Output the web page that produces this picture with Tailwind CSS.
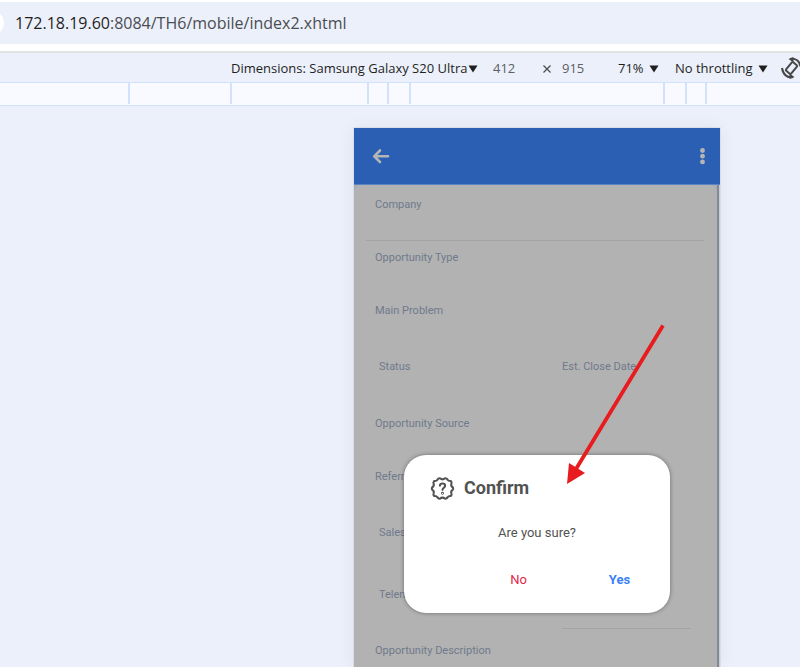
<!DOCTYPE html>
<html lang="en">
<head>
<meta charset="utf-8">
<meta name="viewport" content="width=device-width, initial-scale=1">
<title>Opportunity</title>
<script src="https://cdn.jsdelivr.net/npm/@tailwindcss/browser@4"></script>
</head>
<body class="relative flex h-screen flex-col overflow-hidden bg-[#ebf0fa] font-['Open_Sans','Noto_Sans',sans-serif] text-[#1f1f1f]">
  <!-- Address bar -->
  <header class="shrink-0 bg-white pt-0.5 pb-[7px]">
    <div class="flex h-[42px] items-center overflow-hidden bg-[#ecf0fa]">
      <span class="-ml-5 size-6 shrink-0 rounded-full bg-white"></span>
      <p class="pl-[11px] text-[16px] leading-6 whitespace-nowrap">172.18.19.60<span class="text-[#4a4d51]">:8084/TH6/mobile/index2.xhtml</span></p>
    </div>
  </header>

  <!-- Device toolbar -->
  <div class="flex h-[31px] shrink-0 items-center overflow-hidden border-t-2 border-[#e1e3e3] pt-[3px] pl-[231px] text-[13px] whitespace-nowrap">
    <button class="flex w-[262px] shrink-0 items-center gap-px">Dimensions: Samsung Galaxy S20 Ultra
      <svg class="h-2 w-[10px]" viewBox="0 0 10 8"><path d="M0.5 0.5h9L5 7.5z" fill="#1f1f1f"/></svg>
    </button>
    <input aria-label="Width" value="412" class="w-[49px] shrink-0 bg-transparent text-[#5b5e64]">
    <svg class="h-2 w-[10px] shrink-0" viewBox="0 0 10 8"><path d="M1.5 0.5l7 7M8.500 0.500l-7 7" stroke="#474b50" stroke-width="1.200"/></svg>
    <input aria-label="Height" value="915" class="ml-[10px] w-[56px] shrink-0 bg-transparent text-[#5b5e64]">
    <button class="flex w-[57px] shrink-0 items-center gap-[5px]">71%
      <svg class="h-2 w-[10px]" viewBox="0 0 10 8"><path d="M0.5 0.5h9L5 7.5z" fill="#1f1f1f"/></svg>
    </button>
    <button class="flex w-[106px] shrink-0 items-center gap-[5px]">No throttling
      <svg class="h-2 w-[10px]" viewBox="0 0 10 8"><path d="M0.5 0.5h9L5 7.5z" fill="#1f1f1f"/></svg>
    </button>
    <button aria-label="Rotate" class="shrink-0 pb-[3px]">
      <svg class="size-[22px]" viewBox="0 0 22 22" fill="none" stroke="#474747" stroke-width="2">
        <rect x="7.200" y="5.500" width="6.600" height="11" rx="1" transform="rotate(40 10.500 11)"/>
        <path d="M9 2c5-1.300 9.500 1.500 10.500 7.500M12 20C7 21.300 2 18 1 11"/>
        <path d="M12.500 0v5.500L7.500 2zM8.500 22v-5.500l5 3.500z" fill="#474747" stroke="none"/>
      </svg>
    </button>
  </div>

  <!-- Breakpoint ruler -->
  <div class="grid h-6 shrink-0 grid-cols-[130px_102px_137px_20px_22px_254px_22px_20px_1fr] border-y border-[#d3e2fc] bg-[#f8faff] pb-px">
    <span class="border-r-2 border-[#d3e2fc]"></span>
    <span class="border-r-2 border-[#d3e2fc]"></span>
    <span class="border-r-2 border-[#d3e2fc]"></span>
    <span class="border-r-2 border-[#d3e2fc]"></span>
    <span class="border-r-2 border-[#d3e2fc]"></span>
    <span class="border-r-2 border-[#d3e2fc]"></span>
    <span class="border-r-2 border-[#d3e2fc]"></span>
    <span class="border-r-2 border-[#d3e2fc]"></span>
  </div>

  <!-- Emulated device -->
  <main class="flex min-h-0 flex-1 pt-[22px] pl-[354px] font-[Roboto,sans-serif]">
    <section class="relative flex w-[366px] shrink-0 flex-col bg-[#a4acba] shadow-[0_0_16px_rgba(60,80,120,0.08),0_0_0_1px_#dfe3ea]">
      <div class="flex h-[57px] shrink-0 items-center justify-between border-b border-[#5a84c4] bg-[#2a5fb3] pr-[13px] pl-[18px]">
        <button aria-label="Back">
          <svg class="size-[18px]" viewBox="0 0 18 18" fill="none" stroke="#b5b5b5" stroke-width="2.600" stroke-linecap="round" stroke-linejoin="round"><path d="M16 9.300H3M8 3.500L2.200 9.300 8 15"/></svg>
        </button>
        <button aria-label="More">
          <svg class="h-[18px] w-2" viewBox="0 0 8 18" fill="#b5b5b5"><circle cx="3.500" cy="3.500" r="2.400"/><circle cx="3.500" cy="9.200" r="2.400"/><circle cx="3.500" cy="14.900" r="2.400"/></svg>
        </button>
      </div>

      <div class="flex min-h-0 flex-1">
        <form class="min-w-0 flex-1 overflow-hidden rounded-t-lg bg-[#b2b2b2] pr-[13px] pl-3 text-[11px] leading-4 text-[#6f7a8c]">
          <div class="h-14 border-b border-[#a4a4a4] px-[9px] pt-3">
            <label for="company" class="block">Company</label>
            <input id="company" class="block h-6 w-full bg-transparent">
          </div>
          <div class="h-[53px] px-[9px] pt-[9px]">
            <label for="type" class="block">Opportunity Type</label>
            <input id="type" class="block h-6 w-full bg-transparent">
          </div>
          <div class="h-[53px] px-[9px] pt-[9px]">
            <label for="problem" class="block">Main Problem</label>
            <input id="problem" class="block h-6 w-full bg-transparent">
          </div>
          <div class="grid h-[60px] grid-cols-2 gap-x-[54px] px-[13px] pt-3">
            <div>
              <label for="status" class="block">Status</label>
              <input id="status" class="block h-6 w-full bg-transparent">
            </div>
            <div>
              <label for="close" class="block">Est. Close Date</label>
              <input id="close" class="block h-6 w-full bg-transparent">
            </div>
          </div>
          <div class="h-[53px] px-[9px] pt-[9px]">
            <label for="source" class="block">Opportunity Source</label>
            <input id="source" class="block h-6 w-full bg-transparent">
          </div>
          <div class="h-[53px] px-[9px] pt-[9px]">
            <label for="referral" class="block">Referral</label>
            <input id="referral" class="block h-6 w-full bg-transparent">
          </div>
          <div class="h-[62px] px-[13px] pt-3">
            <label for="sales" class="block">Sales</label>
            <input id="sales" class="block h-6 w-full bg-transparent">
          </div>
          <div class="grid h-[59px] grid-cols-2 gap-x-[54px] px-[13px] pt-3">
            <div>
              <label for="tele" class="block">Telem</label>
              <input id="tele" class="block h-6 w-full bg-transparent">
            </div>
            <div class="h-[42px] border-b border-[#a4a4a4]"></div>
          </div>
          <div class="px-[9px] pt-[9px]">
            <label for="description" class="block">Opportunity Description</label>
            <input id="description" class="block h-6 w-full bg-transparent">
          </div>
        </form>
        <div class="w-[3px] border-r border-[#c9ccd1] bg-[#848a93]"></div>
      </div>

      <!-- Confirmation dialog -->
      <div role="dialog" aria-labelledby="dialog-title" class="absolute top-[327px] left-[50px] w-[266px] rounded-[22px] bg-white px-[26px] pt-5 pb-[23px] shadow-[0_0_4px_rgba(0,0,0,0.4)]">
        <div class="flex items-center gap-[9px]">
          <svg class="size-[25px]" viewBox="0 0 24 24" fill="none" stroke="#525252" stroke-width="2" stroke-linejoin="round" stroke-linecap="round">
            <path d="M9.500 2.200Q12 4.200 14.500 2.200Q16 2 17 3.700Q17.600 5 20 4.800Q21.200 6 20.500 7.500Q19.800 9.800 22 11Q22.500 12 22 13Q19.800 14.200 20.500 16.500Q21.200 18 20 19.200Q17.600 19 17 20.300Q16 22 14.500 21.800Q12 19.800 9.500 21.800Q8 22 7 20.300Q6.400 19 4 19.200Q2.800 18 3.500 16.500Q4.200 14.200 2 13Q1.500 12 2 11Q4.200 9.800 3.500 7.500Q2.800 6 4 4.800Q6.400 5 7 3.700Q8 2 9.500 2.200z"/>
            <path d="M9.500 9.300c.2-2.900 5-2.800 5 0 0 1.900-2.500 2-2.500 4"/>
            <circle cx="12" cy="16.600" r="0.400"/>
          </svg>
          <h2 id="dialog-title" class="text-lg leading-[26px] font-bold text-[#525252]">Confirm</h2>
        </div>
        <p class="mt-[22px] text-center text-[13px] leading-5 text-[#525252]">Are you sure?</p>
        <div class="mt-[27px] flex justify-end gap-[60px] pr-[3px] text-[13px] leading-5">
          <button class="w-[39px] text-center text-[#e0284a]">No</button>
          <button class="w-[43px] text-center font-bold text-[#3b82f6]">Yes</button>
        </div>
      </div>
    </section>
  </main>

  <!-- Pointer arrow -->
  <svg class="pointer-events-none absolute top-[320px] left-[560px] h-[170px] w-[110px]" viewBox="0 0 110 170" fill="#e81c1e">
    <path d="M103 5.500L16 149" stroke="#e81c1e" stroke-width="3.800"/>
    <path d="M7 164L9 143l16 10z"/>
  </svg>
</body>
</html>
